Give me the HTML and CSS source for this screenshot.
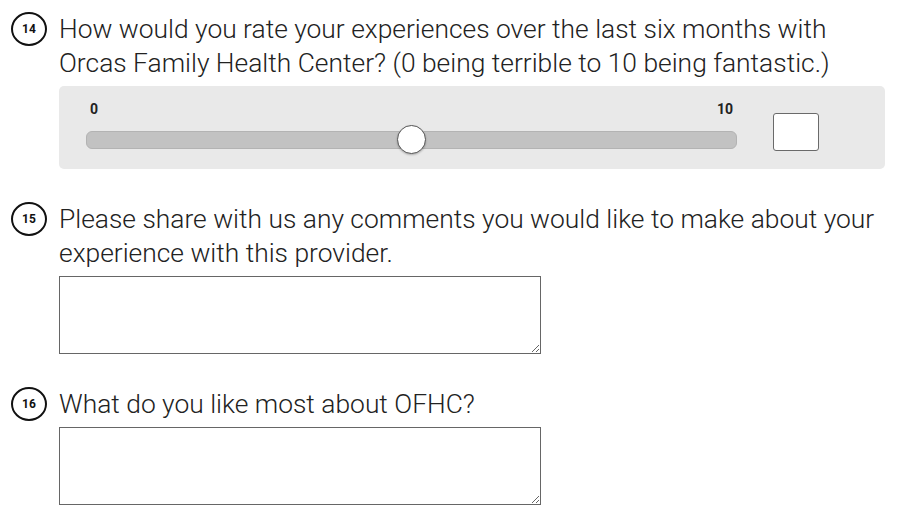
FILE: index.html
```html
<!DOCTYPE html>
<html lang="en">
<head>
  <meta charset="UTF-8">
  <meta name="viewport" content="width=device-width, initial-scale=1.0">
  <title>OFHC Patient Survey</title>
  <link rel="stylesheet" href="styles.css">
</head>
<body>
  <div class="survey">
    <div class="item">
      <span class="num">14</span>
      <div class="body">
        <p class="question">How would you rate your experiences over the last six months with Orcas Family Health Center? (0 being terrible to 10 being fantastic.)</p>
        <div class="slider-panel">
          <div class="slider">
            <div class="ends">
              <span>0</span>
              <span>10</span>
            </div>
            <input type="range" min="0" max="10" value="5">
          </div>
          <input type="text" class="value-box">
        </div>
      </div>
    </div>

    <div class="item">
      <span class="num">15</span>
      <div class="body">
        <p class="question">Please share with us any comments you would like to make about your experience with this provider.</p>
        <textarea></textarea>
      </div>
    </div>

    <div class="item">
      <span class="num">16</span>
      <div class="body">
        <p class="question">What do you like most about OFHC?</p>
        <textarea></textarea>
      </div>
    </div>
  </div>
</body>
</html>
```

FILE: styles.css
```css
body {
  margin: 0;
  font-family: Roboto, "Liberation Sans", Arial, sans-serif;
  background: #fff;
  color: #222;
}
.survey {
  padding: 12px 15px 0 11px;
}
.item {
  display: flex;
  gap: 12px;
  margin-bottom: 33px;
}
.num {
  flex: none;
  width: 36px;
  height: 34px;
  box-sizing: border-box;
  border: 2px solid #111;
  border-radius: 50%;
  display: flex;
  align-items: center;
  justify-content: center;
  font-size: 12px;
  font-weight: 700;
  color: #111;
}
.body {
  flex: 1;
}
.question {
  margin: 0 0 6px;
  font-size: 26.4px;
  line-height: 34px;
  font-weight: 300;
}
.slider-panel {
  display: flex;
  align-items: flex-start;
  gap: 36px;
  background: #e9e9e9;
  border-radius: 5px;
  padding: 15px 66px 15px 27px;
}
.slider {
  flex: 1;
}
.ends {
  display: flex;
  justify-content: space-between;
  padding: 0 4px;
  font-size: 14px;
  font-weight: 700;
  line-height: 16px;
  margin-bottom: 8px;
}
.slider input[type="range"] {
  -webkit-appearance: none;
  appearance: none;
  display: block;
  width: 100%;
  height: 29px;
  margin: 0;
  background: transparent;
}
.slider input[type="range"]::-webkit-slider-runnable-track {
  height: 18px;
  box-sizing: border-box;
  background: #c2c2c2;
  border: 1px solid #b3b3b3;
  border-radius: 6px;
}
.slider input[type="range"]::-webkit-slider-thumb {
  -webkit-appearance: none;
  width: 29px;
  height: 29px;
  margin-top: -6.5px;
  box-sizing: border-box;
  background: #fff;
  border: 1.5px solid #555;
  border-radius: 50%;
  box-shadow: 0 1px 2px rgba(0,0,0,0.25);
}
.value-box {
  width: 46px;
  height: 38px;
  margin-top: 12px;
  box-sizing: border-box;
  border: 1.5px solid #6a6a6a;
  border-radius: 3px;
  background: #fff;
}
textarea {
  display: block;
  width: 482px;
  height: 78px;
  box-sizing: border-box;
  border: 1px solid #666;
  margin: 1px 0 0;
}
```
